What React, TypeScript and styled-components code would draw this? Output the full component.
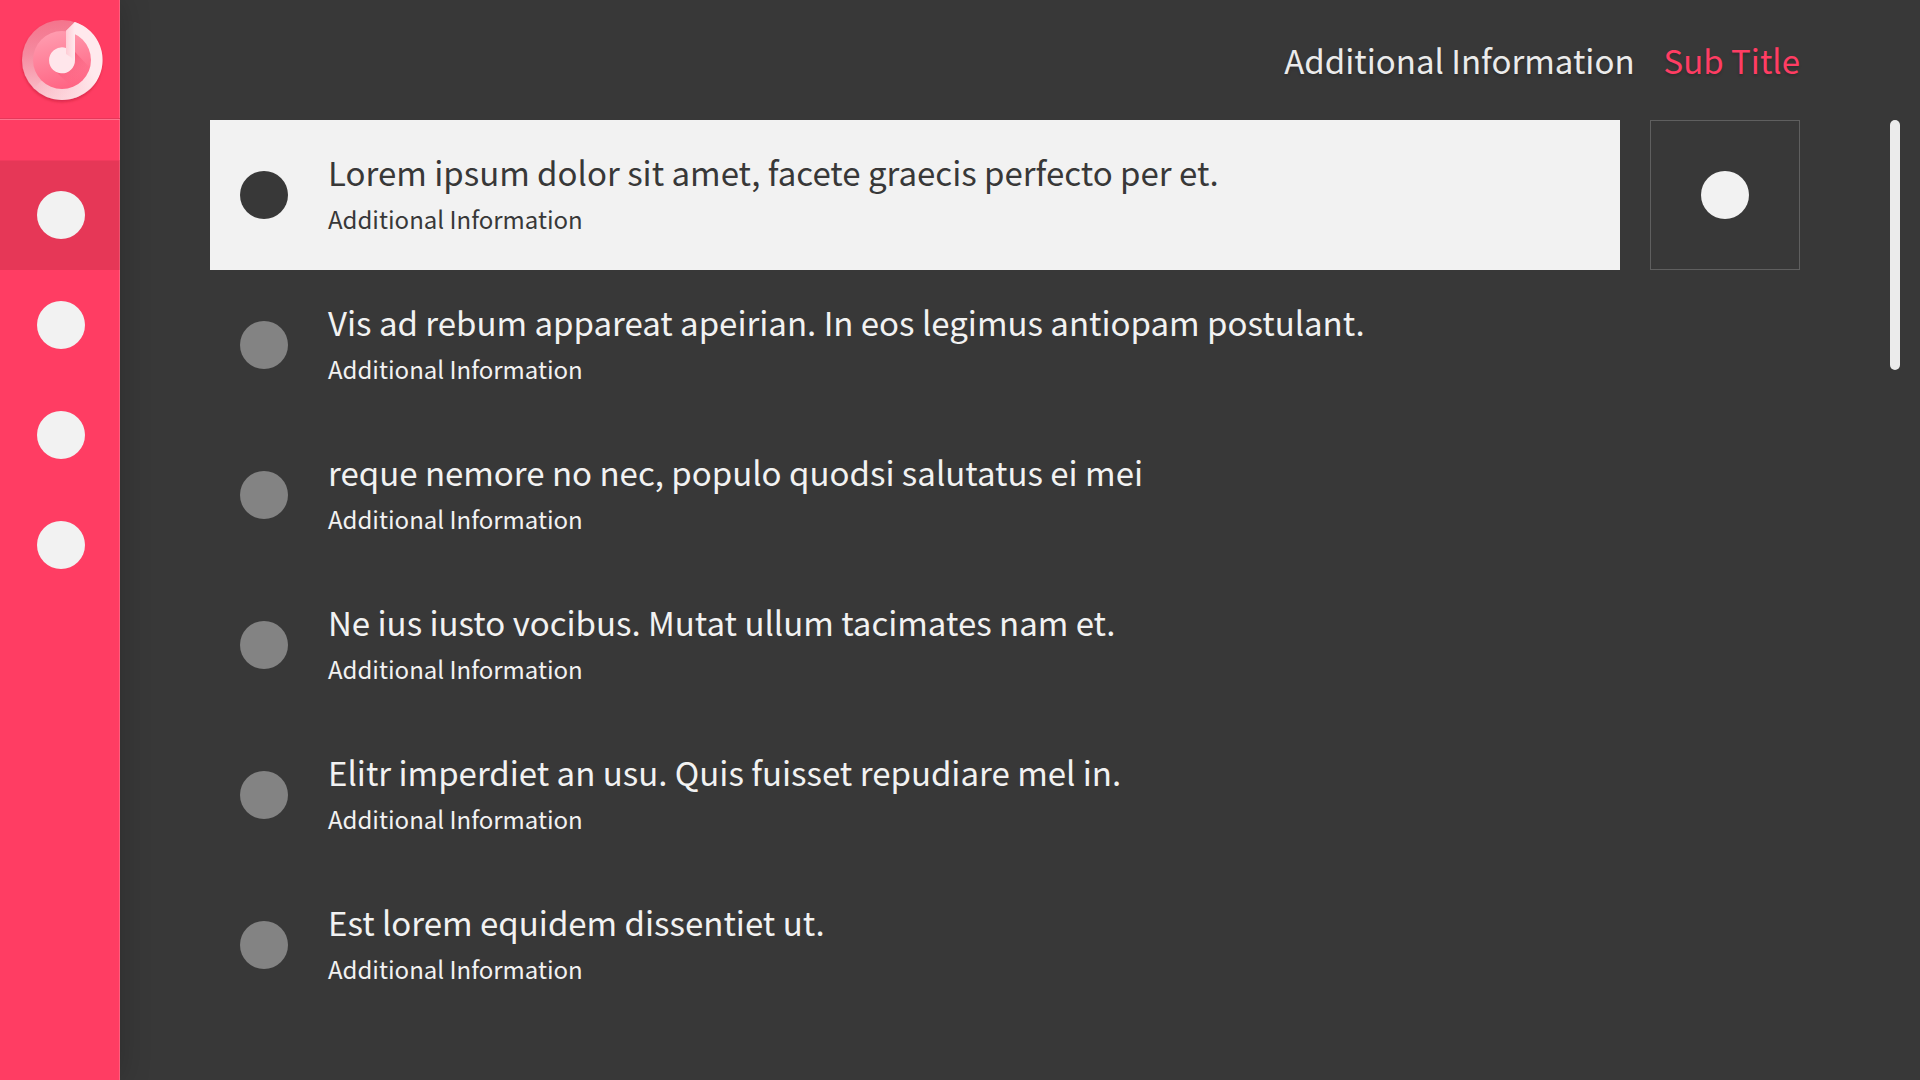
import React, { useState } from "react";
import styled, { createGlobalStyle } from "styled-components";

const GlobalStyle = createGlobalStyle`
  * { box-sizing: border-box; }
  body {
    margin: 0;
    background: #383838;
    color: #f2f2f2;
    font-family: "Noto Sans CJK JP", "Noto Sans", sans-serif;
  }
  button { font: inherit; color: inherit; border: 0; padding: 0; background: none; cursor: pointer; }
`;

const Page = styled.div`
  display: flex;
  min-height: 100vh;
`;

const Sidebar = styled.aside`
  flex: none;
  width: 120px;
  background: #ff3d63;
  box-shadow: inset -1px 0 0 #ff5f7e, 0 0 30px rgba(0, 0, 0, 0.2);
`;

const Brand = styled.div`
  display: flex;
  justify-content: center;
  height: 120px;
  padding: 16px 0 0 4px;
  border-bottom: 1px solid #ff718c;
  box-shadow: inset 0 -1px 0 #e5385a;
`;

const Nav = styled.nav`
  display: flex;
  flex-direction: column;
  padding-top: 40px;
`;

const NavButton = styled.button<{ $active: boolean }>`
  display: flex;
  align-items: center;
  justify-content: center;
  height: 110px;
  padding-left: 2px;
  background: ${(p) => (p.$active ? "#e63757" : "transparent")};
  box-shadow: ${(p) => (p.$active ? "inset -1px 0 0 #ea5570, inset 0 1px 0 #f23a5d" : "none")};
`;

const Dot = styled.span<{ $color: string }>`
  flex: none;
  width: 48px;
  height: 48px;
  border-radius: 50%;
  background: ${(p) => p.$color};
`;

const Main = styled.main`
  flex: 1;
  min-width: 0;
  display: flex;
  flex-direction: column;
  padding: 0 20px 0 90px;
`;

const Header = styled.header`
  display: flex;
  align-items: center;
  justify-content: flex-end;
  gap: 29px;
  height: 120px;
  padding-right: 100px;
  font-size: 33px;
  line-height: 48px;
  text-shadow: 0 2px 3px rgba(0, 0, 0, 0.2);
`;

const Info = styled.span`
  color: #ebebeb;
`;

const SubTitle = styled.h1`
  margin: 0;
  font-size: 33px;
  font-weight: 400;
  color: #ff3d63;
`;

const Body = styled.div`
  display: flex;
  align-items: flex-start;
  gap: 90px;
`;

const List = styled.ul`
  flex: 1;
  min-width: 0;
  margin: 0;
  padding: 0;
  list-style: none;
`;

const Item = styled.li`
  display: grid;
  grid-template-columns: 1fr 150px;
  gap: 30px;
  height: 150px;
`;

const Row = styled.button<{ $selected: boolean }>`
  display: flex;
  align-items: center;
  gap: 40px;
  padding: 0 30px;
  text-align: left;
  background: ${(p) => (p.$selected ? "#f2f2f2" : "transparent")};
  color: ${(p) => (p.$selected ? "#383838" : "#f2f2f2")};
`;

const Lines = styled.span`
  display: flex;
  flex-direction: column;
  min-width: 0;
  padding-bottom: 4px;
`;

const Title = styled.span`
  font-size: 33px;
  line-height: 52px;
`;

const Detail = styled.span`
  font-size: 24px;
  line-height: 42px;
`;

const Action = styled.button`
  display: flex;
  align-items: center;
  justify-content: center;
  border: 1px solid #5f5f5f;
`;

const ScrollThumb = styled.div`
  flex: none;
  width: 10px;
  height: 250px;
  border-radius: 5px;
  background: #ebebeb;
`;

const Logo = () => (
  <svg width="92" height="92" viewBox="16 16 92 92" role="img" aria-label="Music">
    <defs>
      <linearGradient id="ring" x1="56" y1="20" x2="62" y2="100" gradientUnits="userSpaceOnUse">
        <stop offset="0" stopColor="#f4748c" />
        <stop offset="0.4" stopColor="#f58ba0" />
        <stop offset="1" stopColor="#fbc8d1" />
      </linearGradient>
      <linearGradient id="sweep" x1="34" y1="92" x2="88" y2="64" gradientUnits="userSpaceOnUse">
        <stop offset="0" stopColor="#ffe9ed" stopOpacity="0" />
        <stop offset="1" stopColor="#ffe9ed" />
      </linearGradient>
      <linearGradient id="face" x1="50" y1="31" x2="66" y2="89" gradientUnits="userSpaceOnUse">
        <stop offset="0" stopColor="#ff9db0" />
        <stop offset="1" stopColor="#ff6483" />
      </linearGradient>
      <linearGradient id="shade" x1="60" y1="62" x2="76" y2="84" gradientUnits="userSpaceOnUse">
        <stop offset="0" stopColor="#f04467" stopOpacity="0.6" />
        <stop offset="1" stopColor="#ff6483" stopOpacity="0" />
      </linearGradient>
      <linearGradient id="stem" x1="66" y1="0" x2="75" y2="0" gradientUnits="userSpaceOnUse">
        <stop offset="0" stopColor="#ffccd5" />
        <stop offset="1" stopColor="#ffeaee" />
      </linearGradient>
      <filter id="drop" x="-20%" y="-20%" width="140%" height="140%">
        <feDropShadow dx="0" dy="2" stdDeviation="1.5" floodColor="#900020" floodOpacity="0.35" />
      </filter>
    </defs>
    <circle cx="62" cy="60" r="40" fill="url(#ring)" filter="url(#drop)" />
    <path d="M75 22A40 40 0 1 1 34 88L62 60Z" fill="url(#sweep)" />
    <circle cx="62" cy="60" r="29" fill="url(#face)" />
    <path d="M53 69 72 87A29 29 0 0 0 90 68L75 52Z" fill="url(#shade)" />
    <path d="M66 31 75 22V60A13 13 0 1 1 66 48Z" fill="#ffe6eb" />
    <path d="M66 31 75 22V60L66 54Z" fill="url(#stem)" />
  </svg>
);

const sections = ["Section 1", "Section 2", "Section 3", "Section 4"];

const items = [
  "Lorem ipsum dolor sit amet, facete graecis perfecto per et.",
  "Vis ad rebum appareat apeirian. In eos legimus antiopam postulant.",
  "reque nemore no nec, populo quodsi salutatus ei mei",
  "Ne ius iusto vocibus. Mutat ullum tacimates nam et.",
  "Elitr imperdiet an usu. Quis fuisset repudiare mel in.",
  "Est lorem equidem dissentiet ut.",
];

export default function App() {
  const [section, setSection] = useState(0);
  const [selected, setSelected] = useState(0);

  return (
    <>
      <GlobalStyle />
      <Page>
        <Sidebar>
          <Brand>
            <Logo />
          </Brand>
          <Nav>
            {sections.map((name, i) => (
              <NavButton key={name} $active={i === section} aria-label={name} onClick={() => setSection(i)}>
                <Dot $color="#f2f2f2" />
              </NavButton>
            ))}
          </Nav>
        </Sidebar>
        <Main>
          <Header>
            <Info>Additional Information</Info>
            <SubTitle>Sub Title</SubTitle>
          </Header>
          <Body>
            <List>
              {items.map((text, i) => (
                <Item key={text}>
                  <Row $selected={i === selected} onClick={() => setSelected(i)}>
                    <Dot $color={i === selected ? "#383838" : "#838383"} />
                    <Lines>
                      <Title>{text}</Title>
                      <Detail>Additional Information</Detail>
                    </Lines>
                  </Row>
                  {i === selected && (
                    <Action aria-label="Item options">
                      <Dot $color="#f2f2f2" />
                    </Action>
                  )}
                </Item>
              ))}
            </List>
            <ScrollThumb />
          </Body>
        </Main>
      </Page>
    </>
  );
}
